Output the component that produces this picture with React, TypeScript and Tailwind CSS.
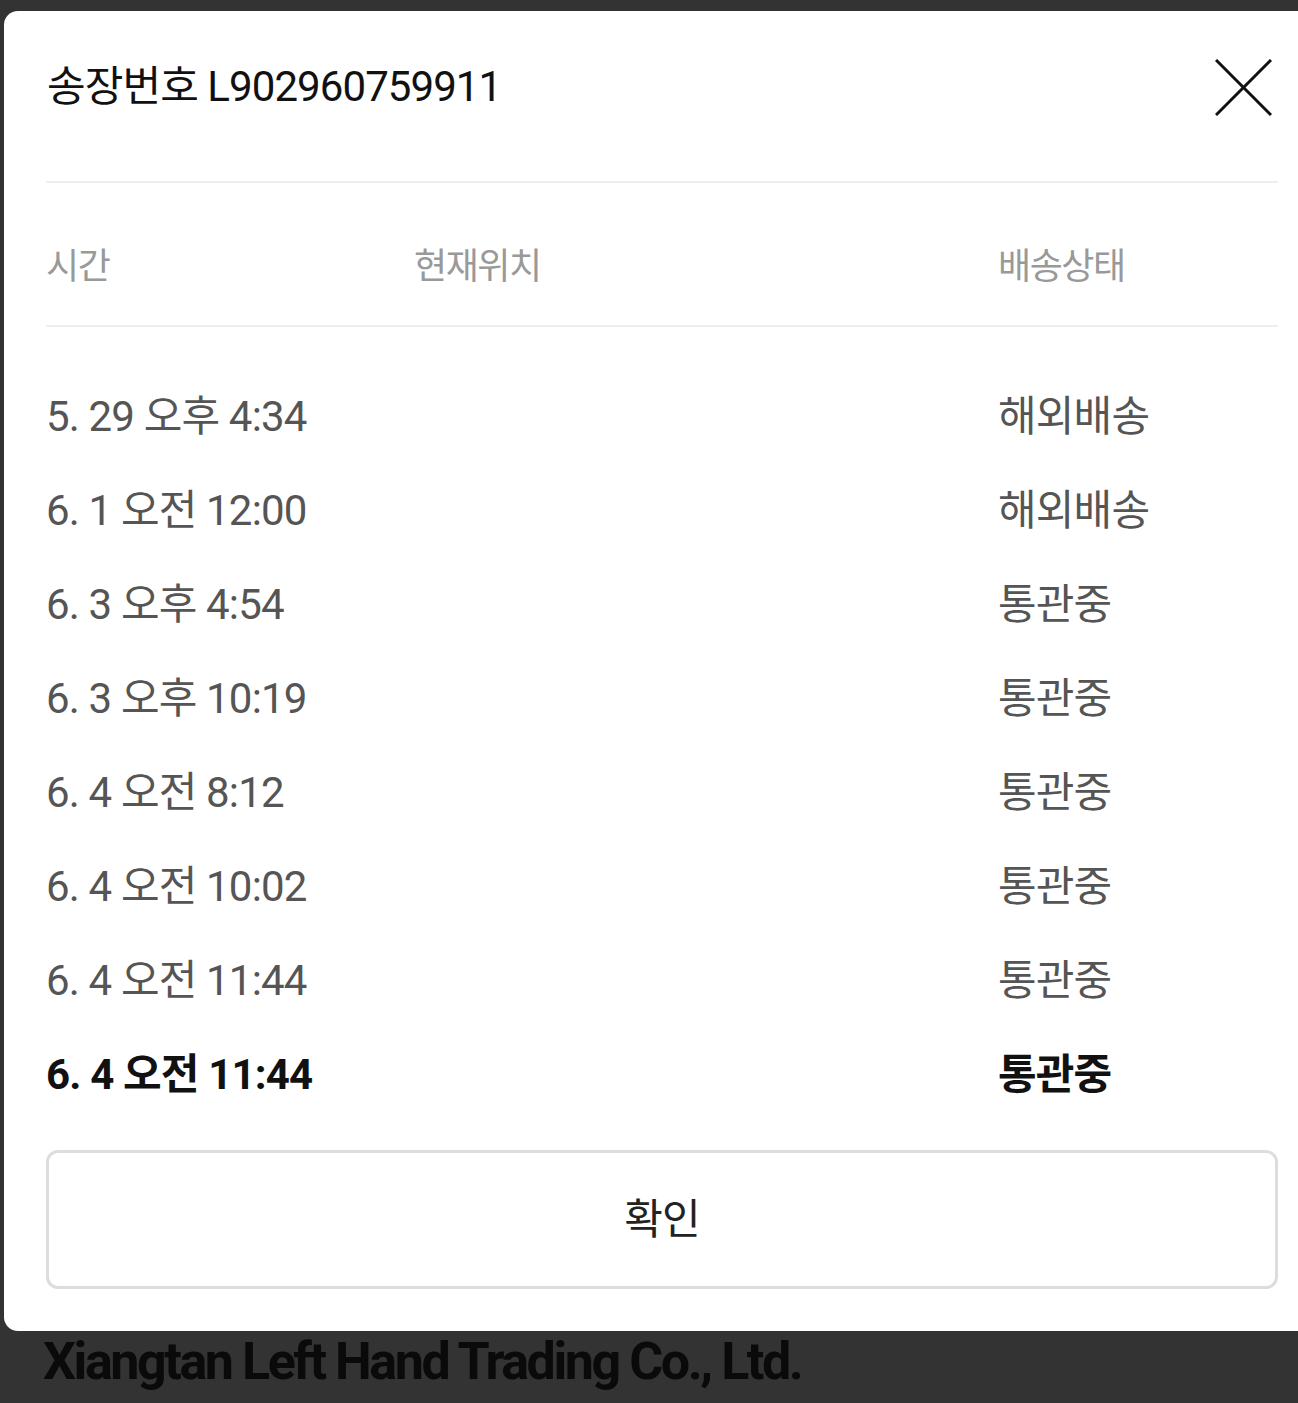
import React from "react";

const rows = [
  ["5. 29 오후 4:34", "해외배송"],
  ["6. 1 오전 12:00", "해외배송"],
  ["6. 3 오후 4:54", "통관중"],
  ["6. 3 오후 10:19", "통관중"],
  ["6. 4 오전 8:12", "통관중"],
  ["6. 4 오전 10:02", "통관중"],
  ["6. 4 오전 11:44", "통관중"],
  ["6. 4 오전 11:44", "통관중"],
];

const font = { fontFamily: 'Roboto, "Noto Sans CJK KR", sans-serif' };

export default function App() {
  return (
    <div className="w-[1298px] h-[1403px] overflow-hidden bg-[#333333] pt-[11px] pl-[4px]" style={font}>
      <div className="w-[1310px] bg-white rounded-[14px] px-[42px] pb-[42px]">
        <div className="h-[152px] flex items-center justify-between w-[1232px]">
          <div className="text-[42px] text-[#111] tracking-[-0.022em] leading-none pl-[1px]">송장번호 L902960759911</div>
          <svg width="57" height="57" viewBox="0 0 57 57" className="mr-[6px]">
            <line x1="1" y1="1" x2="56" y2="56" stroke="#111" strokeWidth="3" />
            <line x1="56" y1="1" x2="1" y2="56" stroke="#111" strokeWidth="3" />
          </svg>
        </div>
        <div className="w-[1232px] mt-[18px] border-t-2 border-[#eeeeee]" />
        <div className="w-[1232px] grid grid-cols-[368px_584px_1fr] pt-[59px] pb-[33px] text-[36px] leading-[50px] text-[#999] tracking-[-0.04em]">
          <div>시간</div>
          <div>현재위치</div>
          <div>배송상태</div>
        </div>
        <div className="w-[1232px] border-t-2 border-[#eeeeee]" />
        <div className="w-[1232px] pt-[42px]">
          {rows.map((r, i) => {
            const last = i === rows.length - 1;
            return (
              <div
                key={i}
                className={`grid grid-cols-[368px_584px_1fr] h-[94px] items-center text-[42px] tracking-[-0.02em] ${last ? "font-bold text-[#111]" : "text-[#555]"}`}
              >
                <div>{r[0]}</div>
                <div></div>
                <div>{r[1]}</div>
              </div>
            );
          })}
        </div>
        <button className="mt-[29px] w-[1232px] h-[139px] border-[3px] border-[#dddddd] rounded-[12px] bg-white flex items-center justify-center text-[42px] text-[#222] tracking-[-0.02em]" style={font}>
          확인
        </button>
      </div>
      <div className="pl-[39px] pt-[1px] text-[52px] font-bold text-[#0a0a0a] tracking-[-0.047em] leading-[60px]" style={font}>
        Xiangtan Left Hand Trading Co., Ltd.
      </div>
    </div>
  );
}
